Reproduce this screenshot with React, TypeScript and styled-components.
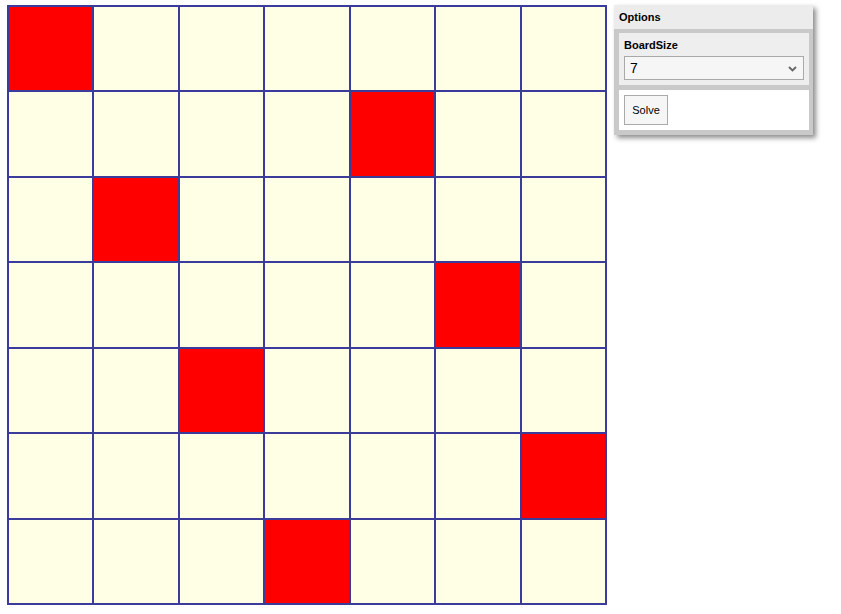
import React from "react";
import styled, { createGlobalStyle } from "styled-components";

const Global = createGlobalStyle`
  html, body { margin: 0; padding: 0; background: #fff; }
  body { font-family: "Liberation Sans", Arial, sans-serif; }
`;

const Page = styled.div`
  display: flex;
  align-items: flex-start;
  gap: 7px;
  padding: 5px 0 0 7px;
`;

const Board = styled.div<{ $n: number }>`
  width: 600px;
  height: 600px;
  box-sizing: border-box;
  border: 1px solid #3b3b9b;
  display: grid;
  grid-template-columns: repeat(${(p) => p.$n}, 1fr);
  grid-template-rows: repeat(${(p) => p.$n}, 1fr);
`;

const Cell = styled.div<{ $queen: boolean }>`
  box-sizing: border-box;
  border: 1px solid #3b3b9b;
  background: ${(p) => (p.$queen ? "#ff0000" : "#ffffe6")};
`;

const Panel = styled.div`
  width: 199px;
  background: #c9c9c9;
  box-shadow: 3px 3px 5px rgba(0, 0, 0, 0.45);
  font-size: 11px;
  color: #000;
`;

const Header = styled.div`
  background: #ececec;
  height: 24px;
  box-sizing: border-box;
  padding: 6px 5px 0;
  font-weight: bold;
`;

const Body = styled.div`
  display: flex;
  flex-direction: column;
  gap: 5px;
  padding: 4px 4px 5px 5px;
`;

const Section = styled.div<{ $bg: string }>`
  background: ${(p) => p.$bg};
  padding: 5px;
`;

const Label = styled.div`
  font-weight: bold;
  height: 13px;
  line-height: 13px;
  margin: 1px 0 4px;
`;

const SelectWrap = styled.div`
  position: relative;
`;

const Select = styled.select`
  appearance: none;
  width: 100%;
  height: 24px;
  box-sizing: border-box;
  border: 1px solid #a9a9a9;
  border-radius: 0;
  background: #f6f6f6;
  font-family: "Liberation Sans", Arial, sans-serif;
  font-size: 14px;
  padding: 0 5px;
  color: #000;
  outline: none;
`;

const Chevron = styled.svg`
  position: absolute;
  right: 7px;
  top: 10px;
  pointer-events: none;
`;

const Button = styled.button`
  width: 44px;
  height: 30px;
  box-sizing: border-box;
  border: 1px solid #aaa;
  border-radius: 0;
  background: #f6f6f6;
  font-family: "Liberation Sans", Arial, sans-serif;
  font-size: 11px;
  padding: 0;
  color: #000;
`;

const queens = [0, 4, 1, 5, 2, 6, 3];

export default function App() {
  const n = 7;
  const cells = [];
  for (let r = 0; r < n; r++) {
    for (let c = 0; c < n; c++) {
      cells.push(<Cell key={`${r}-${c}`} $queen={queens[r] === c} />);
    }
  }
  return (
    <>
      <Global />
      <Page>
        <Board $n={n}>{cells}</Board>
        <Panel>
          <Header>Options</Header>
          <Body>
            <Section $bg="#eeeeee">
              <Label>BoardSize</Label>
              <SelectWrap>
                <Select defaultValue="7">
                  {[4, 5, 6, 7, 8, 9, 10, 11, 12].map((v) => (
                    <option key={v} value={String(v)}>
                      {v}
                    </option>
                  ))}
                </Select>
                <Chevron width="9" height="6" viewBox="0 0 9 6">
                  <path d="M1 1 L4.5 4.5 L8 1" fill="none" stroke="#666" strokeWidth="1.8" />
                </Chevron>
              </SelectWrap>
            </Section>
            <Section $bg="#ffffff">
              <Button>Solve</Button>
            </Section>
          </Body>
        </Panel>
      </Page>
    </>
  );
}
